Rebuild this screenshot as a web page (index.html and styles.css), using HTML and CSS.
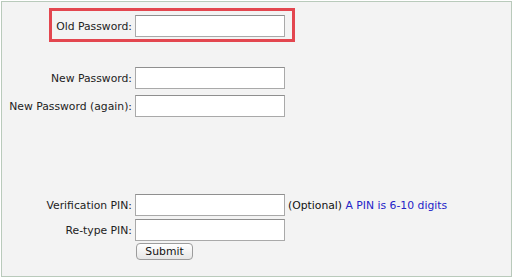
FILE: index.html
```html
<!DOCTYPE html>
<html lang="en">
  <head>
    <meta charset="UTF-8" />
    <meta name="viewport" content="width=device-width, initial-scale=1.0" />
    <title>Change Password</title>
    <link rel="stylesheet" href="styles.css">
  </head>

  <body>
    <form class="panel">
      <div class="highlight">
        <div class="row">
          <label class="label" for="old-password">Old Password:</label>
          <input type="password" id="old-password" class="field" />
        </div>
      </div>

      <div class="row new-first">
        <label class="label" for="new-password">New Password:</label>
        <input type="password" id="new-password" class="field" />
      </div>
      <div class="row new-second">
        <label class="label" for="new-password-again">New Password (again):</label>
        <input type="password" id="new-password-again" class="field" />
      </div>

      <div class="row pin-first">
        <label class="label" for="pin">Verification PIN:</label>
        <input type="password" id="pin" class="field" />
        <span class="hint">(Optional) <span class="hint-blue">A PIN is 6-10 digits</span></span>
      </div>
      <div class="row pin-second">
        <label class="label" for="pin-again">Re-type PIN:</label>
        <input type="password" id="pin-again" class="field" />
      </div>

      <div class="row submit-row">
        <span class="label"></span>
        <button type="button" class="submit">Submit</button>
      </div>
    </form>
  </body>
</html>
```

FILE: styles.css
```css
* {
  box-sizing: border-box;
  margin: 0;
  padding: 0;
}

body {
  background: #ffffff;
  padding: 1px;
  font-family: "DejaVu Sans", Verdana, sans-serif;
  font-size: 10.8px;
  color: #222;
}

.panel {
  width: 511px;
  height: 276px;
  background: #f3f3f3;
  border: 1px solid #b9cabb;
  padding-top: 6px;
}

.highlight {
  margin-left: 47px;
  width: 246px;
  height: 34px;
  border: 3px solid #e3464f;
  padding-top: 4px;
}

.row {
  display: flex;
  align-items: center;
}

.label {
  width: 133px;
  text-align: right;
  padding-right: 3px;
  flex-shrink: 0;
}

.highlight .label {
  width: 83px;
}

.field {
  width: 150px;
  height: 22px;
  background: #fff;
  border: 1px solid #a9a9a9;
  border-top-color: #8f8f8f;
}

.new-first {
  margin-top: 25px;
}

.new-second {
  margin-top: 6px;
}

.pin-first {
  margin-top: 77px;
}

.pin-second {
  margin-top: 3px;
}

.submit-row {
  margin-top: 2px;
}

.hint {
  margin-left: 3px;
  color: #111;
}

.hint-blue {
  color: #2424c8;
}

.submit {
  width: 57px;
  height: 17px;
  margin-left: 1px;
  font-family: inherit;
  font-size: 10.8px;
  color: #111;
  background: linear-gradient(#ffffff, #e6e6e6);
  border: 1px solid #9c9c9c;
  border-radius: 4px;
}
```
